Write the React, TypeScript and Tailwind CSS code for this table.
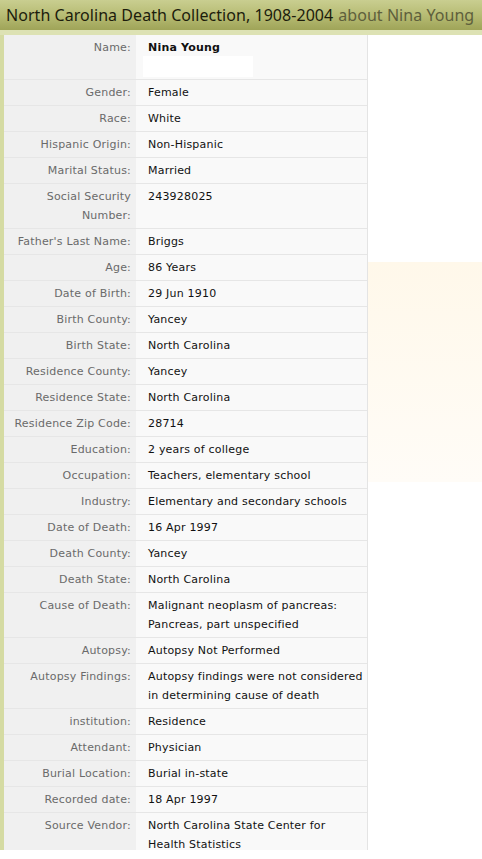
import React from "react";

type Row = { label: string; value: string[] };

const rows: Row[] = [
  { label: "Gender:", value: ["Female"] },
  { label: "Race:", value: ["White"] },
  { label: "Hispanic Origin:", value: ["Non-Hispanic"] },
  { label: "Marital Status:", value: ["Married"] },
  { label: "Social Security Number:", value: ["243928025"] },
  { label: "Father's Last Name:", value: ["Briggs"] },
  { label: "Age:", value: ["86 Years"] },
  { label: "Date of Birth:", value: ["29 Jun 1910"] },
  { label: "Birth County:", value: ["Yancey"] },
  { label: "Birth State:", value: ["North Carolina"] },
  { label: "Residence County:", value: ["Yancey"] },
  { label: "Residence State:", value: ["North Carolina"] },
  { label: "Residence Zip Code:", value: ["28714"] },
  { label: "Education:", value: ["2 years of college"] },
  { label: "Occupation:", value: ["Teachers, elementary school"] },
  { label: "Industry:", value: ["Elementary and secondary schools"] },
  { label: "Date of Death:", value: ["16 Apr 1997"] },
  { label: "Death County:", value: ["Yancey"] },
  { label: "Death State:", value: ["North Carolina"] },
  { label: "Cause of Death:", value: ["Malignant neoplasm of pancreas:", "Pancreas, part unspecified"] },
  { label: "Autopsy:", value: ["Autopsy Not Performed"] },
  { label: "Autopsy Findings:", value: ["Autopsy findings were not considered", "in determining cause of death"] },
  { label: "institution:", value: ["Residence"] },
  { label: "Attendant:", value: ["Physician"] },
  { label: "Burial Location:", value: ["Burial in-state"] },
  { label: "Recorded date:", value: ["18 Apr 1997"] },
  { label: "Source Vendor:", value: ["North Carolina State Center for", "Health Statistics"] },
];

export default function App() {
  return (
    <div className="w-[482px] h-[859px] bg-white overflow-hidden" style={{ fontFamily: '"DejaVu Sans", Verdana, sans-serif' }}>
      <div
        className="h-[30px] flex items-center pl-[6px] whitespace-nowrap bg-gradient-to-b from-[#c9ce90] via-[#b7bc74] to-[#9fa458] text-[16px] tracking-[0.05px] text-[#1c1c0c]"
        style={{ fontFamily: '"Noto Sans", "Open Sans", sans-serif' }}
      >
        <span>North Carolina Death Collection, 1908-2004</span>
        <span className="ml-[5px] text-[#5e5f3c]">about Nina Young</span>
      </div>
      <div className="h-[5px] bg-[#dde2b4]" />
      <div className="flex h-[815px] overflow-hidden">
        <div className="w-[4px] bg-[#d5dba3] shrink-0" />
        <div className="w-[364px] shrink-0 border-r border-[#e4e4e4] text-[11px] leading-[19px] tracking-[0.2px]">
          <div className="flex border-b border-[#e6e6e6]">
            <div className="w-[132px] shrink-0 bg-[#f0f0f0] text-right pr-[5px] pt-[3px] text-[#6a6a6a]">Name:</div>
            <div className="flex-1 bg-[#f9f9f9] pl-[7px] pt-[3px] pb-[2px]">
              <div className="pl-[5px] font-bold text-[#111111]">Nina Young</div>
              <div className="mt-[-1px] w-[110px] h-[21px] bg-white" />
            </div>
          </div>
          {rows.map((r) => (
            <div key={r.label} className="flex border-b border-[#e6e6e6]">
              <div className="w-[132px] shrink-0 bg-[#f0f0f0] text-right pr-[5px] py-[3px] text-[#6a6a6a] pl-[6px]">
                {r.label}
              </div>
              <div className="flex-1 bg-[#f9f9f9] pl-[12px] py-[3px] text-[#111111]">
                {r.value.map((v) => (
                  <div key={v} className="whitespace-nowrap">{v}</div>
                ))}
              </div>
            </div>
          ))}
        </div>
        <div className="flex-1 flex flex-col">
          <div className="h-[227px]" />
          <div className="h-[220px] bg-gradient-to-b from-[#fff8ea] to-[#fffcf7]" />
        </div>
      </div>
    </div>
  );
}
